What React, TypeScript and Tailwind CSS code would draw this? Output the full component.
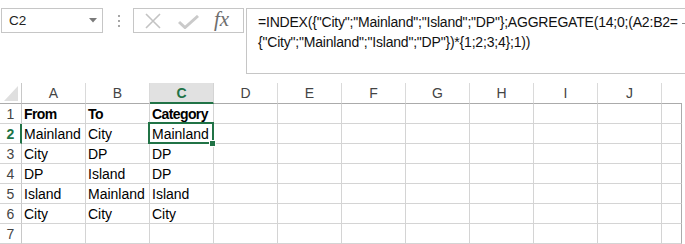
import React from "react";

const cols = ["A", "B", "C", "D", "E", "F", "G", "H", "I", "J"];
const data: string[][] = [
  ["From", "To", "Category"],
  ["Mainland", "City", "Mainland"],
  ["City", "DP", "DP"],
  ["DP", "Island", "DP"],
  ["Island", "Mainland", "Island"],
  ["City", "City", "City"],
  ["", "", ""],
];

const line1 = '=INDEX({"City";"Mainland";"Island";"DP"};AGGREGATE(14;0;(A2:B2=';
const line2 = '{"City";"Mainland";"Island";"DP"})*{1;2;3;4};1))';

export default function App() {
  return (
    <div
      className="w-[685px] h-[244px] bg-white overflow-hidden text-black"
      style={{ fontFamily: '"Liberation Sans", Arial, sans-serif' }}
    >
      {/* Formula bar */}
      <div className="flex items-start h-[83px] pt-[8px]">
        <div className="ml-[1px] w-[102px] h-[25px] border border-[#c6c6c6] flex items-center justify-between pl-[7px] pr-[5px]">
          <span className="text-[13.5px] text-[#222] pt-[2px]">C2</span>
          <svg width="8" height="5" viewBox="0 0 8 5">
            <polygon points="0,0 8,0 4,4.5" fill="#7a7a7a" />
          </svg>
        </div>
        <div className="w-[30px] h-[25px] flex flex-col items-center justify-center gap-[3px] pl-[1px]">
          <div className="w-[2px] h-[2px] bg-[#a6a6a6]" />
          <div className="w-[2px] h-[2px] bg-[#a6a6a6]" />
          <div className="w-[2px] h-[2px] bg-[#a6a6a6]" />
        </div>
        <div className="w-[111px] h-[25px] border border-[#c6c6c6] flex items-center">
          <svg width="16" height="16" viewBox="0 0 16 16" className="ml-[11px]">
            <path d="M1 1 L15 15 M15 1 L1 15" stroke="#c3c3c3" strokeWidth="1.6" />
          </svg>
          <svg width="21" height="14" viewBox="0 0 21 14" className="ml-[17px] mt-[3px]">
            <path d="M1 7 L7 12.5 L20 1" stroke="#cacaca" strokeWidth="3" fill="none" />
          </svg>
          <span
            className="ml-[15px] text-[21px] italic text-[#6e6e6e] leading-none -mt-[2px]"
            style={{ fontFamily: '"Liberation Serif", "Times New Roman", serif' }}
          >
            fx
          </span>
        </div>
        <div className="relative ml-[2px] flex-1 h-[66px] border border-r-0 border-[#c6c6c6] pl-[11px] pt-[3px] text-[14px] leading-[20px] text-[#111] tracking-[-0.2px] whitespace-nowrap">
          <div>{line1}</div>
          <div>{line2}</div>
          <div className="absolute right-0 top-[14px] w-[3px] h-[1px] bg-[#888]" />
        </div>
      </div>

      {/* Grid */}
      <div className="grid grid-cols-[22px_repeat(10,64px)_20px]">
        <div className="h-[21px] border-b border-r border-[#ababab] border-r-[#c8c8c8] flex items-end justify-end pr-[3px] pb-[2px]">
          <svg width="14" height="15" viewBox="0 0 14 15">
            <polygon points="14,0 14,15 0,15" fill="#dfdfdf" />
          </svg>
        </div>
        {cols.map((c) =>
          c === "C" ? (
            <div
              key={c}
              className="h-[21px] bg-[#e1e1e1] border-r border-r-[#d4d4d4] border-b-2 border-b-[#217346] flex items-center justify-center text-[14px] font-bold text-[#217346] pt-[1px]"
            >
              {c}
            </div>
          ) : (
            <div
              key={c}
              className="h-[21px] border-r border-r-[#dadada] border-b border-b-[#ababab] flex items-center justify-center text-[14px] text-[#444] pt-[1px]"
            >
              {c}
            </div>
          )
        )}
        <div className="h-[21px] border-b border-b-[#ababab]" />

        {data.map((row, r) => (
          <React.Fragment key={r}>
            <div
              className={
                r === 1
                  ? "h-[20px] border-b border-b-[#d4d4d4] border-r-2 border-r-[#217346] flex items-center justify-center text-[14px] font-bold text-[#217346] pt-[1px] pl-[1px]"
                  : "h-[20px] border-b border-b-[#d4d4d4] border-r border-r-[#c8c8c8] flex items-center justify-center text-[14px] text-[#444] pt-[1px]"
              }
            >
              {r + 1}
            </div>
            {cols.map((c, ci) => {
              const v = ci < 3 ? row[ci] : "";
              const bold = r === 0;
              const sel = r === 1 && ci === 2;
              return (
                <div
                  key={c}
                  className={
                    "relative h-[20px] border-b border-r border-[#d4d4d4] pl-[2px] pt-[1px] text-[14px] leading-[19px] whitespace-nowrap " +
                    (bold ? "font-bold tracking-[-0.6px]" : "")
                  }
                >
                  {v}
                  {sel && (
                    <>
                      <div className="absolute -left-[2px] -top-[2px] w-[66px] h-[22px] border-2 border-[#217346] z-10" />
                      <div className="absolute left-[59px] top-[16px] w-[7px] h-[7px] bg-[#217346] border border-white z-20" />
                    </>
                  )}
                </div>
              );
            })}
            <div className="h-[20px] border-b border-b-[#d4d4d4] border-r border-r-[#ababab]" />
          </React.Fragment>
        ))}
      </div>
    </div>
  );
}
